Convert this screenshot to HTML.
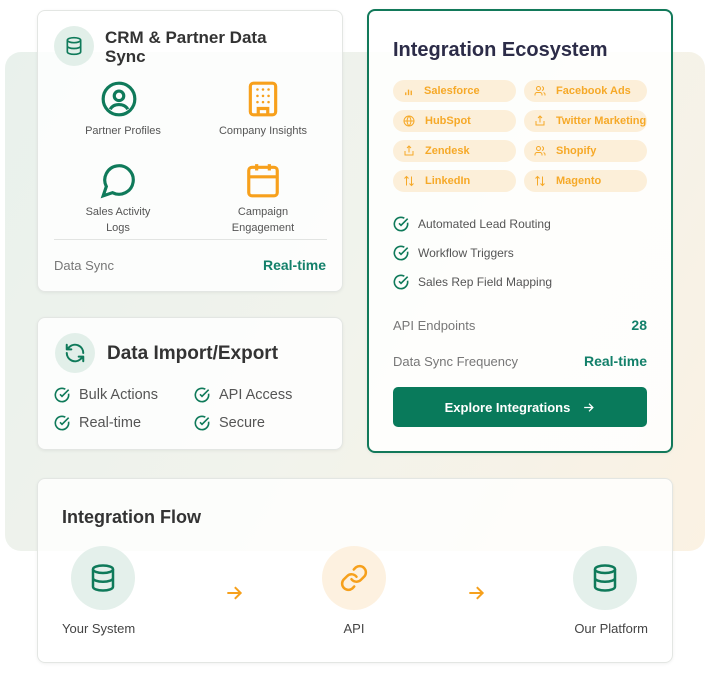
<!DOCTYPE html>
<html><head><meta charset="utf-8"><style>
*{box-sizing:border-box;margin:0;padding:0}
body{width:710px;height:674px;background:#fff;font-family:"Liberation Sans",sans-serif;position:relative;overflow:hidden;color:#444}
.bg{position:absolute;left:5px;top:52px;width:700px;height:499px;border-radius:16px;background:linear-gradient(120deg,#e9f1ec 0%,#f1f3ec 50%,#fbf2e3 100%)}
.card{position:absolute;background:rgba(255,255,255,0.82);border:1px solid #e3e6e3;border-radius:8px;box-shadow:0 1px 3px rgba(0,0,0,0.06)}
.abs{position:absolute}
.circ{position:absolute;border-radius:50%;display:flex;align-items:center;justify-content:center}
.t{position:absolute;white-space:nowrap}
.pill{position:absolute;width:123px;height:22px;border-radius:11px;background:#fcefd9;color:#f6a928;font-size:11px;font-weight:bold;display:flex;align-items:center;padding-left:10px}
.pill svg{margin-right:10px}
.chk{position:absolute;display:flex;align-items:center;font-size:13px;color:#555}
.chk svg{margin-right:9px}
</style></head><body>
<div class="bg"></div>

<!-- Card 1 -->
<div class="card" style="left:37px;top:10px;width:306px;height:282px">
  <div class="circ" style="left:16px;top:15px;width:40px;height:40px;background:#e2efe9">
    <svg width="20" height="20" viewBox="0 0 24 24" fill="none" stroke="#0f7a5a" stroke-width="2"><ellipse cx="12" cy="5" rx="8" ry="3"/><path d="M4 5v14c0 1.7 3.6 3 8 3s8-1.3 8-3V5M4 12c0 1.7 3.6 3 8 3s8-1.3 8-3"/></svg>
  </div>
  <div class="t" style="left:67px;top:17px;font-size:17px;font-weight:bold;color:#333;line-height:19px">CRM &amp; Partner Data<br>Sync</div>
  <svg class="abs" style="left:62px;top:69px" width="38" height="38" viewBox="0 0 24 24" fill="none" stroke="#0f7a5a" stroke-width="2"><circle cx="12" cy="12" r="10"/><circle cx="12" cy="10" r="3"/><path d="M6.5 18.5c1-2 3-3 5.5-3s4.5 1 5.5 3"/></svg>
  <div class="t" style="left:0;width:170px;text-align:center;top:114px;font-size:11px;color:#555">Partner Profiles</div>
  <svg class="abs" style="left:206px;top:69px" width="38" height="38" viewBox="0 0 24 24" fill="none" stroke="#f7a01c" stroke-width="2"><rect x="4" y="2" width="16" height="20" rx="2"/><path d="M9 22v-4h6v4" /><g stroke-width="1.6" stroke-linecap="round"><path d="M8.5 6h.01M12 6h.01M15.5 6h.01M8.5 10h.01M12 10h.01M15.5 10h.01M8.5 14h.01M12 14h.01M15.5 14h.01"/></g></svg>
  <div class="t" style="left:150px;width:150px;text-align:center;top:114px;font-size:11px;color:#555">Company Insights</div>
  <svg class="abs" style="left:62px;top:150px" width="38" height="38" viewBox="0 0 24 24" fill="none" stroke="#0f7a5a" stroke-width="2"><path d="M7.9 20A9 9 0 1 0 4 16.1L2 22z"/></svg>
  <div class="t" style="left:0;width:160px;text-align:center;top:193px;font-size:11px;color:#555;line-height:16px">Sales Activity<br>Logs</div>
  <svg class="abs" style="left:206px;top:150px" width="38" height="38" viewBox="0 0 24 24" fill="none" stroke="#f7a01c" stroke-width="2"><rect x="3" y="4" width="18" height="18" rx="2"/><path d="M16 2v4M8 2v4M3 10h18"/></svg>
  <div class="t" style="left:150px;width:150px;text-align:center;top:193px;font-size:11px;color:#555;line-height:16px">Campaign<br>Engagement</div>
  <div class="abs" style="left:16px;top:228px;width:273px;height:1px;background:#e2e4e2"></div>
  <div class="t" style="left:16px;top:247px;font-size:13px;color:#777">Data Sync</div>
  <div class="t" style="right:16px;top:246px;font-size:14px;font-weight:bold;color:#13806a">Real-time</div>
</div>

<!-- Card 2 -->
<div class="card" style="left:37px;top:317px;width:306px;height:133px">
  <div class="circ" style="left:17px;top:15px;width:40px;height:40px;background:#e2efe9">
    <svg width="22" height="22" viewBox="0 0 24 24" fill="none" stroke="#0f7a5a" stroke-width="2.2" stroke-linecap="round" stroke-linejoin="round"><path d="M21 12a9 9 0 0 0-15-6.7L3 8M3 3v5h5M3 12a9 9 0 0 0 15 6.7l3-2.7M21 21v-5h-5"/></svg>
  </div>
  <div class="t" style="left:69px;top:25px;font-size:19px;font-weight:bold;color:#333">Data Import/Export</div>
  <div class="chk" style="left:16px;top:69px;font-size:14.5px"><svg width="16" height="16" viewBox="0 0 24 24" fill="none" stroke="#0f7a5a" stroke-width="2.4"><path d="M21.8 10A10 10 0 1 1 17 3.3"/><path d="M9 11l3 3L22 4"/></svg>Bulk Actions</div>
  <div class="chk" style="left:156px;top:69px;font-size:14.5px"><svg width="16" height="16" viewBox="0 0 24 24" fill="none" stroke="#0f7a5a" stroke-width="2.4"><path d="M21.8 10A10 10 0 1 1 17 3.3"/><path d="M9 11l3 3L22 4"/></svg>API Access</div>
  <div class="chk" style="left:16px;top:97px;font-size:14.5px"><svg width="16" height="16" viewBox="0 0 24 24" fill="none" stroke="#0f7a5a" stroke-width="2.4"><path d="M21.8 10A10 10 0 1 1 17 3.3"/><path d="M9 11l3 3L22 4"/></svg>Real-time</div>
  <div class="chk" style="left:156px;top:97px;font-size:14.5px"><svg width="16" height="16" viewBox="0 0 24 24" fill="none" stroke="#0f7a5a" stroke-width="2.4"><path d="M21.8 10A10 10 0 1 1 17 3.3"/><path d="M9 11l3 3L22 4"/></svg>Secure</div>
</div>

<!-- Card 3 -->
<div class="card" style="left:367px;top:9px;width:306px;height:444px;border:2px solid #12795a;background:rgba(255,255,255,0.85)">
  <div class="t" style="left:24px;top:28px;font-size:20px;font-weight:bold;color:#2c2c48">Integration Ecosystem</div>
  <div class="pill" style="left:24px;top:69px"><svg width="11" height="11" viewBox="0 0 24 24" stroke="#f6a928" stroke-width="3"><path d="M6 20v-6M12 20V8M18 20v-10"/></svg>Salesforce</div>
  <div class="pill" style="left:155px;top:69px"><svg width="12" height="12" viewBox="0 0 24 24" fill="none" stroke="#f6a928" stroke-width="2"><circle cx="9" cy="7" r="4"/><path d="M2 21v-2a4 4 0 0 1 4-4h6a4 4 0 0 1 4 4v2M16 3.1a4 4 0 0 1 0 7.8M22 21v-2a4 4 0 0 0-3-3.9"/></svg>Facebook Ads</div>
  <div class="pill" style="left:24px;top:99px"><svg width="12" height="12" viewBox="0 0 24 24" fill="none" stroke="#f6a928" stroke-width="2"><circle cx="12" cy="12" r="10"/><path d="M2 12h20M12 2a15 15 0 0 1 0 20M12 2a15 15 0 0 0 0 20"/></svg>HubSpot</div>
  <div class="pill" style="left:155px;top:99px"><svg width="12" height="12" viewBox="0 0 24 24" fill="none" stroke="#f6a928" stroke-width="2"><path d="M4 12v8h16v-8M16 6l-4-4-4 4M12 2v13"/></svg>Twitter Marketing</div>
  <div class="pill" style="left:24px;top:129px"><svg width="12" height="12" viewBox="0 0 24 24" fill="none" stroke="#f6a928" stroke-width="2"><path d="M4 12v8h16v-8M16 6l-4-4-4 4M12 2v13"/></svg>Zendesk</div>
  <div class="pill" style="left:155px;top:129px"><svg width="12" height="12" viewBox="0 0 24 24" fill="none" stroke="#f6a928" stroke-width="2"><circle cx="9" cy="7" r="4"/><path d="M2 21v-2a4 4 0 0 1 4-4h6a4 4 0 0 1 4 4v2M16 3.1a4 4 0 0 1 0 7.8M22 21v-2a4 4 0 0 0-3-3.9"/></svg>Shopify</div>
  <div class="pill" style="left:24px;top:159px"><svg width="12" height="12" viewBox="0 0 24 24" fill="none" stroke="#f6a928" stroke-width="2"><path d="M7 21V3M3 7l4-4 4 4M17 3v18M13 17l4 4 4-4"/></svg>LinkedIn</div>
  <div class="pill" style="left:155px;top:159px"><svg width="12" height="12" viewBox="0 0 24 24" fill="none" stroke="#f6a928" stroke-width="2"><path d="M7 21V3M3 7l4-4 4 4M17 3v18M13 17l4 4 4-4"/></svg>Magento</div>
  <div class="chk" style="left:24px;top:205px;font-size:12px"><svg width="16" height="16" viewBox="0 0 24 24" fill="none" stroke="#0f7a5a" stroke-width="2.4"><path d="M21.8 10A10 10 0 1 1 17 3.3"/><path d="M9 11l3 3L22 4"/></svg>Automated Lead Routing</div>
  <div class="chk" style="left:24px;top:234px;font-size:12px"><svg width="16" height="16" viewBox="0 0 24 24" fill="none" stroke="#0f7a5a" stroke-width="2.4"><path d="M21.8 10A10 10 0 1 1 17 3.3"/><path d="M9 11l3 3L22 4"/></svg>Workflow Triggers</div>
  <div class="chk" style="left:24px;top:263px;font-size:12px"><svg width="16" height="16" viewBox="0 0 24 24" fill="none" stroke="#0f7a5a" stroke-width="2.4"><path d="M21.8 10A10 10 0 1 1 17 3.3"/><path d="M9 11l3 3L22 4"/></svg>Sales Rep Field Mapping</div>
  <div class="t" style="left:24px;top:307px;font-size:13px;color:#777">API Endpoints</div>
  <div class="t" style="right:24px;top:306px;font-size:14px;font-weight:bold;color:#13806a">28</div>
  <div class="t" style="left:24px;top:343px;font-size:13px;color:#777">Data Sync Frequency</div>
  <div class="t" style="right:24px;top:342px;font-size:14px;font-weight:bold;color:#13806a">Real-time</div>
  <div class="abs" style="left:24px;top:376px;width:254px;height:40px;background:#097a5b;border-radius:5px;color:#fff;font-size:13px;font-weight:bold;display:flex;align-items:center;justify-content:center">Explore Integrations<svg style="margin-left:12px" width="13" height="13" viewBox="0 0 24 24" fill="none" stroke="#fff" stroke-width="2.4"><path d="M4 12h16M13 5l7 7-7 7"/></svg></div>
</div>

<!-- Card 4 -->
<div class="card" style="left:37px;top:478px;width:636px;height:185px;background:rgba(255,255,255,0.8)">
  <div class="t" style="left:24px;top:28px;font-size:18px;font-weight:bold;color:#333">Integration Flow</div>
  <div class="circ" style="left:33px;top:67px;width:64px;height:64px;background:#e4f0eb"><svg width="30" height="30" viewBox="0 0 24 24" fill="none" stroke="#0f7a5a" stroke-width="2"><ellipse cx="12" cy="5" rx="8" ry="3"/><path d="M4 5v14c0 1.7 3.6 3 8 3s8-1.3 8-3V5M4 12c0 1.7 3.6 3 8 3s8-1.3 8-3"/></svg></div>
  <div class="t" style="left:24px;top:142px;font-size:13px;color:#444">Your System</div>
  <svg class="abs" style="left:186px;top:104px" width="20" height="20" viewBox="0 0 24 24" fill="none" stroke="#f6a01c" stroke-width="2.4"><path d="M4 12h16M13 5l7 7-7 7"/></svg>
  <div class="circ" style="left:284px;top:67px;width:64px;height:64px;background:#fdf1e0"><svg width="30" height="30" viewBox="0 0 24 24" fill="none" stroke="#f6a01c" stroke-width="2" stroke-linecap="round"><path d="M10 13a5 5 0 0 0 7.5.5l3-3a5 5 0 0 0-7-7l-1.7 1.7"/><path d="M14 11a5 5 0 0 0-7.5-.5l-3 3a5 5 0 0 0 7 7l1.7-1.7"/></svg></div>
  <div class="t" style="left:284px;width:64px;text-align:center;top:142px;font-size:13px;color:#444">API</div>
  <svg class="abs" style="left:428px;top:104px" width="20" height="20" viewBox="0 0 24 24" fill="none" stroke="#f6a01c" stroke-width="2.4"><path d="M4 12h16M13 5l7 7-7 7"/></svg>
  <div class="circ" style="left:535px;top:67px;width:64px;height:64px;background:#e4f0eb"><svg width="30" height="30" viewBox="0 0 24 24" fill="none" stroke="#0f7a5a" stroke-width="2"><ellipse cx="12" cy="5" rx="8" ry="3"/><path d="M4 5v14c0 1.7 3.6 3 8 3s8-1.3 8-3V5M4 12c0 1.7 3.6 3 8 3s8-1.3 8-3"/></svg></div>
  <div class="t" style="right:24px;top:142px;font-size:13px;color:#444">Our Platform</div>
</div>
</body></html>
